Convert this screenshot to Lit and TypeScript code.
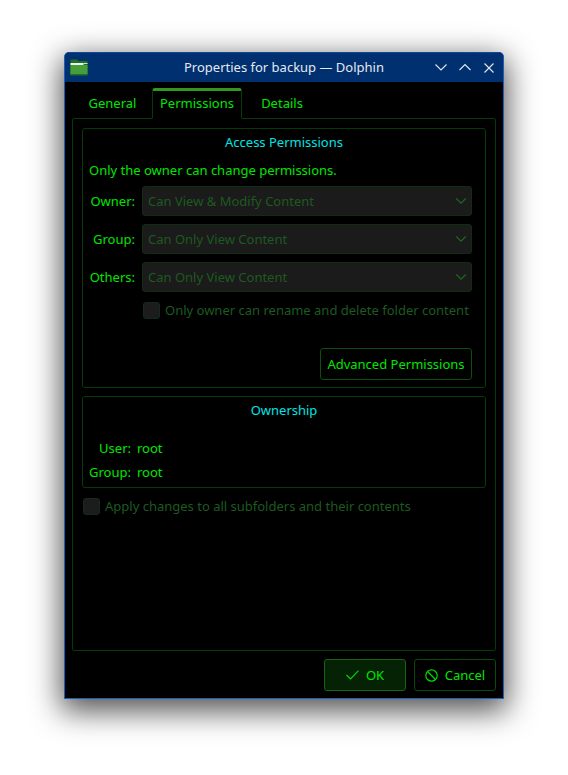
import { LitElement, html, css, svg } from "lit";
import { customElement } from "lit/decorators.js";

const chevron = svg`<svg class="chev" width="10" height="6" viewBox="0 0 10 6"><path d="M0.3 0.5 L5 5.2 L9.7 0.5" fill="none" stroke="#1f6a22" stroke-width="1.1"/></svg>`;

@customElement("app-root")
export class AppRoot extends LitElement {
  static styles = css`
    :host { display: block; height: 775px; background: #fff; overflow: hidden; font-family: "Noto Sans", sans-serif; font-size: 13px; color: #00e600; }
    * { box-sizing: border-box; }
    .stage { padding: 52px 64px 0 64px; }
    .win { width: 440px; height: 647px; background: #000; border: 1px solid #1b5fb8; border-top-color: #0d4a9a; border-radius: 5px 5px 0 0; box-shadow: 0 9px 30px 3px rgba(0,0,0,.68); display: flex; flex-direction: column; }
    .title { height: 29px; background: #00306f; border-radius: 4px 4px 0 0; display: flex; align-items: center; padding: 0 9px 2px 5px; color: #e4e9f0; flex: none; }
    .title .icon { margin-top: 1px; }
    .title .name { flex: 1; text-align: center; padding-left: 45px; }
    .ctl { display: flex; align-items: center; padding-top: 2px; }
    .ctl .up { margin: 0 13px 0 12px; }
    .body { flex: 1; padding: 6px 7px 7px 7px; display: flex; flex-direction: column; }
    .tabs { display: flex; height: 31px; padding-left: 1px; position: relative; z-index: 1; flex: none; }
    .tab { height: 31px; display: flex; align-items: center; justify-content: center; padding-bottom: 1px; }
    .tab.g { width: 79px; }
    .tab.p { width: 90px; border: 1px solid #073a09; border-top: 3px solid #2f9a1f; border-bottom: 1px solid #000; border-radius: 3px 3px 0 0; background: #000; padding-bottom: 4px; }
    .tab.d { width: 80px; }
    .pane { flex: 1; margin-top: -1px; border: 1px solid #073a09; border-radius: 2px; padding: 9px; display: flex; flex-direction: column; gap: 8px; }
    .group { border: 1px solid #073a09; border-radius: 3px; padding: 4px 6px 0 6px; }
    .access { height: 260px; display: flex; flex-direction: column; }
    .owner { height: 92px; }
    .gtitle { color: #00e4e4; text-align: center; line-height: 18px; }
    .note { margin-top: 10px; line-height: 18px; }
    .rows { margin-top: 7px; display: grid; grid-template-columns: 46px 330px; column-gap: 7px; row-gap: 8px; align-items: center; }
    .lab { text-align: right; }
    .combo { height: 30px; background: #1b1b1b; border: 1px solid #0f2e10; border-radius: 3px; padding: 0 5px 0 5px; display: flex; align-items: center; justify-content: space-between; color: #1d5a20; }
    .check { display: flex; align-items: center; gap: 5px; color: #1d5a20; padding-left: 1px; }
    .box { width: 17px; height: 17px; border: 1px solid #132a1c; background: #1c1c1c; border-radius: 3px; flex: none; }
    .check.inner { margin: 9px 0 0 53px; line-height: 18px; white-space: nowrap; padding-left: 1px; }
    .adv { align-self: flex-end; margin: 29px 7px 0 0; height: 32px; width: 152px; border: 1px solid #0a4f0c; border-radius: 3px; display: flex; align-items: center; justify-content: center; }
    .ogrid { margin-top: 20px; display: grid; grid-template-columns: 42px auto; column-gap: 6px; row-gap: 6px; line-height: 18px; }
    .apply { margin-top: 1px; }
    .foot { flex: none; height: 40px; padding-top: 8px; display: flex; justify-content: flex-end; gap: 8px; }
    .btn { height: 32px; border: 1px solid #0a4a0c; border-radius: 3px; display: flex; align-items: center; justify-content: center; gap: 7px; }
    .ok { width: 82px; background: #052205; border-color: #146414; }
    .cancel { width: 82px; }
  `;

  render() {
    return html`<div class="stage"><div class="win">
      <div class="title">
        <svg class="icon" width="18" height="17" viewBox="0 0 18 17">
          <path d="M0.5 1 Q0.5 0.5 1 0.5 h6 l1.5 1.5 h9 v14 h-17.5z" fill="#1f6f24"/>
          <rect x="0.5" y="4" width="13" height="2" fill="#eef5ea"/>
          <rect x="13.5" y="4" width="4" height="1" fill="#cfe4c8"/>
          <rect x="0.5" y="6" width="17" height="9.5" fill="#449f3a"/>
          <rect x="0.5" y="15" width="17" height="1.5" fill="#1f6f24"/>
        </svg>
        <div class="name">Properties for backup — Dolphin</div>
        <div class="ctl">
          <svg width="12" height="9" viewBox="0 0 12 9"><path d="M0.5 1.5 L6 7 L11.5 1.5" fill="none" stroke="#e4e9f0" stroke-width="1.1"/></svg>
          <svg class="up" width="12" height="9" viewBox="0 0 12 9"><path d="M0.5 7 L6 1.5 L11.5 7" fill="none" stroke="#e4e9f0" stroke-width="1.1"/></svg>
          <svg width="10" height="10" viewBox="0 0 10 10"><path d="M0.5 0.5 L9.5 9.5 M9.5 0.5 L0.5 9.5" fill="none" stroke="#e4e9f0" stroke-width="1.1"/></svg>
        </div>
      </div>
      <div class="body">
        <div class="tabs">
          <div class="tab g">General</div>
          <div class="tab p">Permissions</div>
          <div class="tab d">Details</div>
        </div>
        <div class="pane">
          <div class="group access">
            <div class="gtitle">Access Permissions</div>
            <div class="note">Only the owner can change permissions.</div>
            <div class="rows">
              <div class="lab">Owner:</div><div class="combo">Can View &amp; Modify Content ${chevron}</div>
              <div class="lab">Group:</div><div class="combo">Can Only View Content ${chevron}</div>
              <div class="lab">Others:</div><div class="combo">Can Only View Content ${chevron}</div>
            </div>
            <div class="check inner"><span class="box"></span>Only owner can rename and delete folder content</div>
            <div class="adv">Advanced Permissions</div>
          </div>
          <div class="group owner">
            <div class="gtitle">Ownership</div>
            <div class="ogrid">
              <div class="lab">User:</div><div>root</div>
              <div class="lab">Group:</div><div>root</div>
            </div>
          </div>
          <div class="check apply"><span class="box"></span>Apply changes to all subfolders and their contents</div>
        </div>
        <div class="foot">
          <div class="btn ok">
            <svg width="13" height="10" viewBox="0 0 13 10"><path d="M0.5 5 L4.5 9 L12.5 0.7" fill="none" stroke="#00d800" stroke-width="1.1"/></svg>OK
          </div>
          <div class="btn cancel">
            <svg width="13" height="13" viewBox="0 0 13 13"><circle cx="6.5" cy="6.5" r="5.7" fill="none" stroke="#00d800" stroke-width="1.2"/><path d="M2.5 2.5 L10.5 10.5" stroke="#00d800" stroke-width="1.2"/></svg>Cancel
          </div>
        </div>
      </div>
    </div></div>`;
  }
}
